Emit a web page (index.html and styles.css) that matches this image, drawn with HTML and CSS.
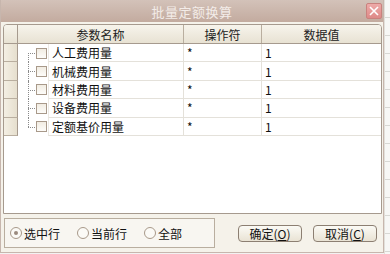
FILE: index.html
```html
<!DOCTYPE html>
<html lang="zh-CN">
<head>
    <meta charset="UTF-8">
    <title>批量定额换算</title>
    <link rel="stylesheet" href="styles.css">
</head>
<body>
    <div class="screen">
        <div class="dialog">
            <div class="titlebar">
                <span class="title">批量定额换算</span>
                <span class="close">
                    <svg width="10" height="10" viewBox="0 0 10 10">
                        <path d="M1 1 L9 9 M9 1 L1 9" stroke="#fff" stroke-width="1.6" fill="none"/>
                    </svg>
                </span>
            </div>

            <div class="grid">
                <div class="grid-row head">
                    <div class="rh"></div>
                    <div class="hc name">参数名称</div>
                    <div class="hc">操作符</div>
                    <div class="hc last">数据值</div>
                </div>

                <div class="grid-row">
                    <div class="rh"></div>
                    <div class="tree first"><span class="check"></span></div>
                    <div class="cell">人工费用量</div>
                    <div class="cell">*</div>
                    <div class="cell last">1</div>
                </div>
                <div class="grid-row">
                    <div class="rh"></div>
                    <div class="tree"><span class="check"></span></div>
                    <div class="cell">机械费用量</div>
                    <div class="cell">*</div>
                    <div class="cell last">1</div>
                </div>
                <div class="grid-row">
                    <div class="rh"></div>
                    <div class="tree"><span class="check"></span></div>
                    <div class="cell">材料费用量</div>
                    <div class="cell">*</div>
                    <div class="cell last">1</div>
                </div>
                <div class="grid-row">
                    <div class="rh"></div>
                    <div class="tree"><span class="check"></span></div>
                    <div class="cell">设备费用量</div>
                    <div class="cell">*</div>
                    <div class="cell last">1</div>
                </div>
                <div class="grid-row">
                    <div class="rh"></div>
                    <div class="tree end"><span class="check"></span></div>
                    <div class="cell">定额基价用量</div>
                    <div class="cell">*</div>
                    <div class="cell last">1</div>
                </div>
            </div>

            <div class="footer">
                <div class="scope">
                    <label class="radio"><span class="dot on"></span>选中行</label>
                    <label class="radio"><span class="dot"></span>当前行</label>
                    <label class="radio"><span class="dot"></span>全部</label>
                </div>
                <button class="btn">确定(<u>O</u>)</button>
                <button class="btn">取消(<u>C</u>)</button>
            </div>
        </div>
        <div class="behind"></div>
    </div>
</body>
</html>
```

FILE: styles.css
```css
* {
    margin: 0;
    padding: 0;
    box-sizing: border-box;
}

body {
    width: 390px;
    height: 254px;
    overflow: hidden;
    font-family: "Noto Sans CJK SC", "Liberation Sans", sans-serif;
    font-size: 12px;
    color: #111;
    background: #f2f2f2;
}

.screen {
    display: flex;
    height: 254px;
}

.dialog {
    width: 384px;
    height: 253px;
    display: flex;
    flex-direction: column;
    background: #f5f2ea;
    border: 1px solid #c7b6ad;
    border-top: none;
}

.behind {
    flex: 1;
    background: repeating-linear-gradient(to bottom, #f7f7f5 0, #f7f7f5 17px, #d8d8d4 17px, #d8d8d4 18px);
    border-left: 1px solid #e2e0da;
}

/* title bar */
.titlebar {
    height: 22px;
    display: flex;
    align-items: center;
    justify-content: center;
    position: relative;
    background: linear-gradient(#d3c2b9, #c3ab9f);
}

.title {
    color: #f3ece8;
    font-size: 13px;
    letter-spacing: 0.5px;
}

.close {
    position: absolute;
    right: 1px;
    top: 3px;
    width: 16px;
    height: 16px;
    display: flex;
    align-items: center;
    justify-content: center;
    background: linear-gradient(#eeaaa8, #de8a88);
    border: 1px solid #c9827e;
    border-radius: 2px;
}

/* grid */
.grid {
    margin: 2px 0 0 2px;
    width: 379px;
    height: 190px;
    background: #fff;
    border: 1px solid #a69a8e;
    border-radius: 4px 4px 0 0;
    overflow: hidden;
}

.grid-row {
    display: grid;
    grid-template-columns: 14px 30px 136px 78px 119px;
    height: 18.4px;
}

.grid-row.head {
    grid-template-columns: 14px 166px 78px 119px;
    height: 19px;
    background: linear-gradient(#f7f4ec, #e8e2d3);
    border-bottom: 1px solid #a69a8e;
}

.hc {
    display: flex;
    align-items: center;
    justify-content: center;
    border-right: 1px solid #b9ae9f;
    color: #222;
}

.hc.last, .cell.last {
    border-right: none;
}

.rh {
    border-right: 1px solid #a69a8e;
    border-bottom: 1px solid #b9ae9f;
    background: linear-gradient(to right, #f4efe4, #e6dfce);
}

.head .rh {
    border-bottom: none;
    background: none;
}

.cell {
    display: flex;
    align-items: center;
    padding-left: 3px;
    border-right: 1px solid #e4e1da;
    border-bottom: 1px solid #e4e1da;
}

.grid-row .cell:nth-child(3) {
    border-left: 1px solid #ece9e3;
}

/* tree connector lines */
.tree {
    position: relative;
    display: flex;
    align-items: center;
    justify-content: flex-end;
    padding-right: 1px;
}

.tree::before {
    content: "";
    position: absolute;
    left: 10px;
    top: 0;
    bottom: 0;
    border-left: 1px dotted #8a8a8a;
}

.tree.first::before {
    top: 9px;
}

.tree.end::before {
    bottom: 9px;
}

.tree::after {
    content: "";
    position: absolute;
    left: 10px;
    top: 9px;
    width: 7px;
    border-top: 1px dotted #8a8a8a;
}

.check {
    width: 11px;
    height: 11px;
    border: 1px solid #a8998a;
    background: linear-gradient(#f1ece2, #fdfcf9);
}

/* footer */
.footer {
    display: flex;
    align-items: center;
    padding: 4px 0 0 3px;
}

.scope {
    width: 211px;
    height: 30px;
    display: flex;
    align-items: center;
    padding-left: 5px;
    border: 1px solid #b9ae9f;
    background: #f8f6f1;
}

.radio {
    display: flex;
    align-items: center;
    width: 67px;
    color: #111;
}

.dot {
    width: 12px;
    height: 12px;
    margin-right: 2px;
    border-radius: 50%;
    border: 1px solid #a8998a;
    background: #fbfaf6;
    display: flex;
    align-items: center;
    justify-content: center;
}

.dot.on::after {
    content: "";
    width: 4px;
    height: 4px;
    border-radius: 50%;
    background: #9a8a7e;
}

.btn {
    width: 64px;
    height: 17px;
    margin-left: 23px;
    font-family: "Noto Sans CJK SC", "Liberation Sans", sans-serif;
    font-size: 12px;
    color: #111;
    background: linear-gradient(#fbfaf5, #e9e3d4);
    border: 1px solid #8c7f72;
    border-radius: 4px;
    display: flex;
    align-items: center;
    justify-content: center;
}

.btn + .btn {
    margin-left: 11px;
}
```
